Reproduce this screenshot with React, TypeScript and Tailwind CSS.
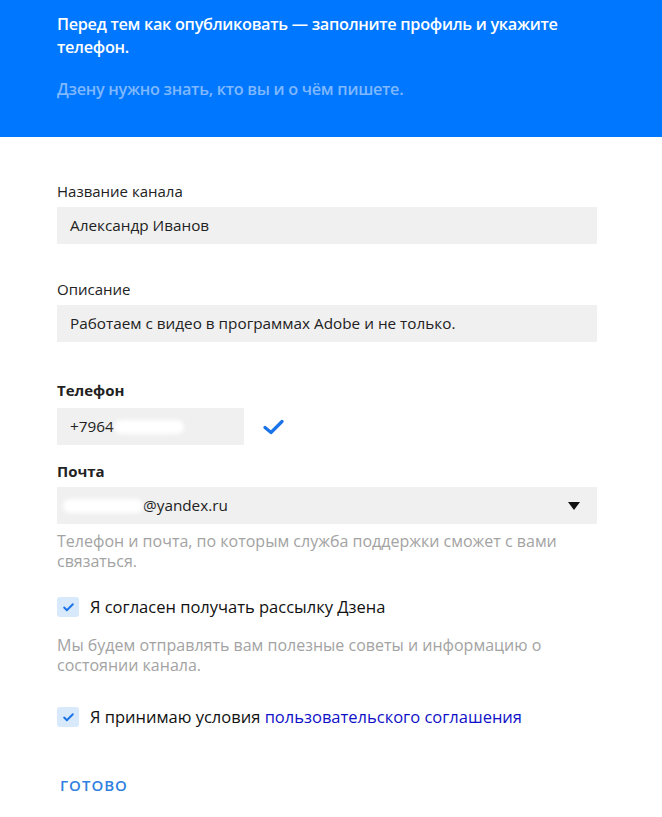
import { Check } from 'lucide-react'

const font = { fontFamily: '"Open Sans", "Noto Sans", sans-serif' }

function Label({ children, bold }: { children: React.ReactNode; bold?: boolean }) {
  return (
    <div className={`text-[15px] leading-5 text-[#222] ${bold ? 'font-bold' : ''}`}>{children}</div>
  )
}

function Blur({ w }: { w: number }) {
  return <span className="inline-block h-[14px] rounded-full bg-white blur-[2px] align-middle" style={{ width: w }} />
}

function Checkbox({ children }: { children: React.ReactNode }) {
  return (
    <div className="flex items-center gap-[11px]">
      <div className="w-[22px] h-[20px] rounded-[3px] bg-[#d7e9fb] flex items-center justify-center">
        <Check className="w-[13px] h-[13px] text-[#1a73e8]" strokeWidth={3.5} />
      </div>
      <span className="text-[16.5px] leading-5 text-[#111]">{children}</span>
    </div>
  )
}

export default function App() {
  return (
    <div className="w-[662px] h-[817px] bg-white overflow-hidden" style={font}>
      {/* шапка */}
      <div className="h-[137px] bg-[#0077ff] px-[57px] pt-[13px]">
        <div className="text-[16.3px] leading-[23px] font-semibold text-white tracking-[-0.3px]">
          Перед тем как опубликовать — заполните профиль и укажите телефон.
        </div>
        <div className="mt-[19px] text-[16.3px] leading-[23px] font-semibold text-[#7fb8ff] tracking-[-0.3px]">
          Дзену нужно знать, кто вы и о чём пишете.
        </div>
      </div>

      <div className="px-[57px] pr-[65px] pt-[44px] flex flex-col">
        <Label>Название канала</Label>
        <div className="mt-[6px] h-[37px] bg-[#f0f0f0] flex items-center px-[13px] text-[15.3px] text-[#222]">
          Александр Иванов
        </div>

        <div className="mt-[35px]">
          <Label>Описание</Label>
        </div>
        <div className="mt-[6px] h-[37px] bg-[#f0f0f0] flex items-center px-[13px] text-[15.3px] text-[#222]">
          Работаем с видео в программах Adobe и не только.
        </div>

        <div className="mt-[38px]">
          <Label bold>Телефон</Label>
        </div>
        <div className="mt-[8px] flex items-center">
          <div className="w-[187px] h-[37px] bg-[#f0f0f0] flex items-center px-[13px] text-[15.3px] text-[#222]">
            +7964<Blur w={70} />
          </div>
          <svg className="ml-[19px]" width="21" height="16" viewBox="0 0 21 16">
            <path d="M2 8.5 L8 13.5 L19 2.5" fill="none" stroke="#1a73e8" strokeWidth="3.2" strokeLinecap="round" strokeLinejoin="round" />
          </svg>
        </div>

        <div className="mt-[16px]">
          <Label bold>Почта</Label>
        </div>
        <div className="mt-[6px] h-[37px] bg-[#f0f0f0] flex items-center pl-[6px] pr-[17px] text-[15.3px] text-[#222]">
          <Blur w={80} />
          <span>@yandex.ru</span>
          <svg className="ml-auto" width="12" height="8" viewBox="0 0 12 8">
            <path d="M0 0 H12 L6 8 Z" fill="#111" />
          </svg>
        </div>

        <div className="mt-[7px] text-[16px] leading-5 text-[#a3a3a3]">
          Телефон и почта, по которым служба поддержки сможет с вами связаться.
        </div>

        <div className="mt-[26px]">
          <Checkbox>Я согласен получать рассылку Дзена</Checkbox>
        </div>

        <div className="mt-[18px] pr-[10px] text-[16px] leading-5 text-[#a3a3a3]">
          Мы будем отправлять вам полезные советы и информацию о состоянии канала.
        </div>

        <div className="mt-[32px]">
          <Checkbox>
            Я принимаю условия <span className="text-[#1010c8]">пользовательского соглашения</span>
          </Checkbox>
        </div>

        <div className="mt-[48px] ml-[3px] text-[15px] leading-5 font-semibold tracking-[1px] text-[#2f80e0]">ГОТОВО</div>
      </div>
    </div>
  )
}
